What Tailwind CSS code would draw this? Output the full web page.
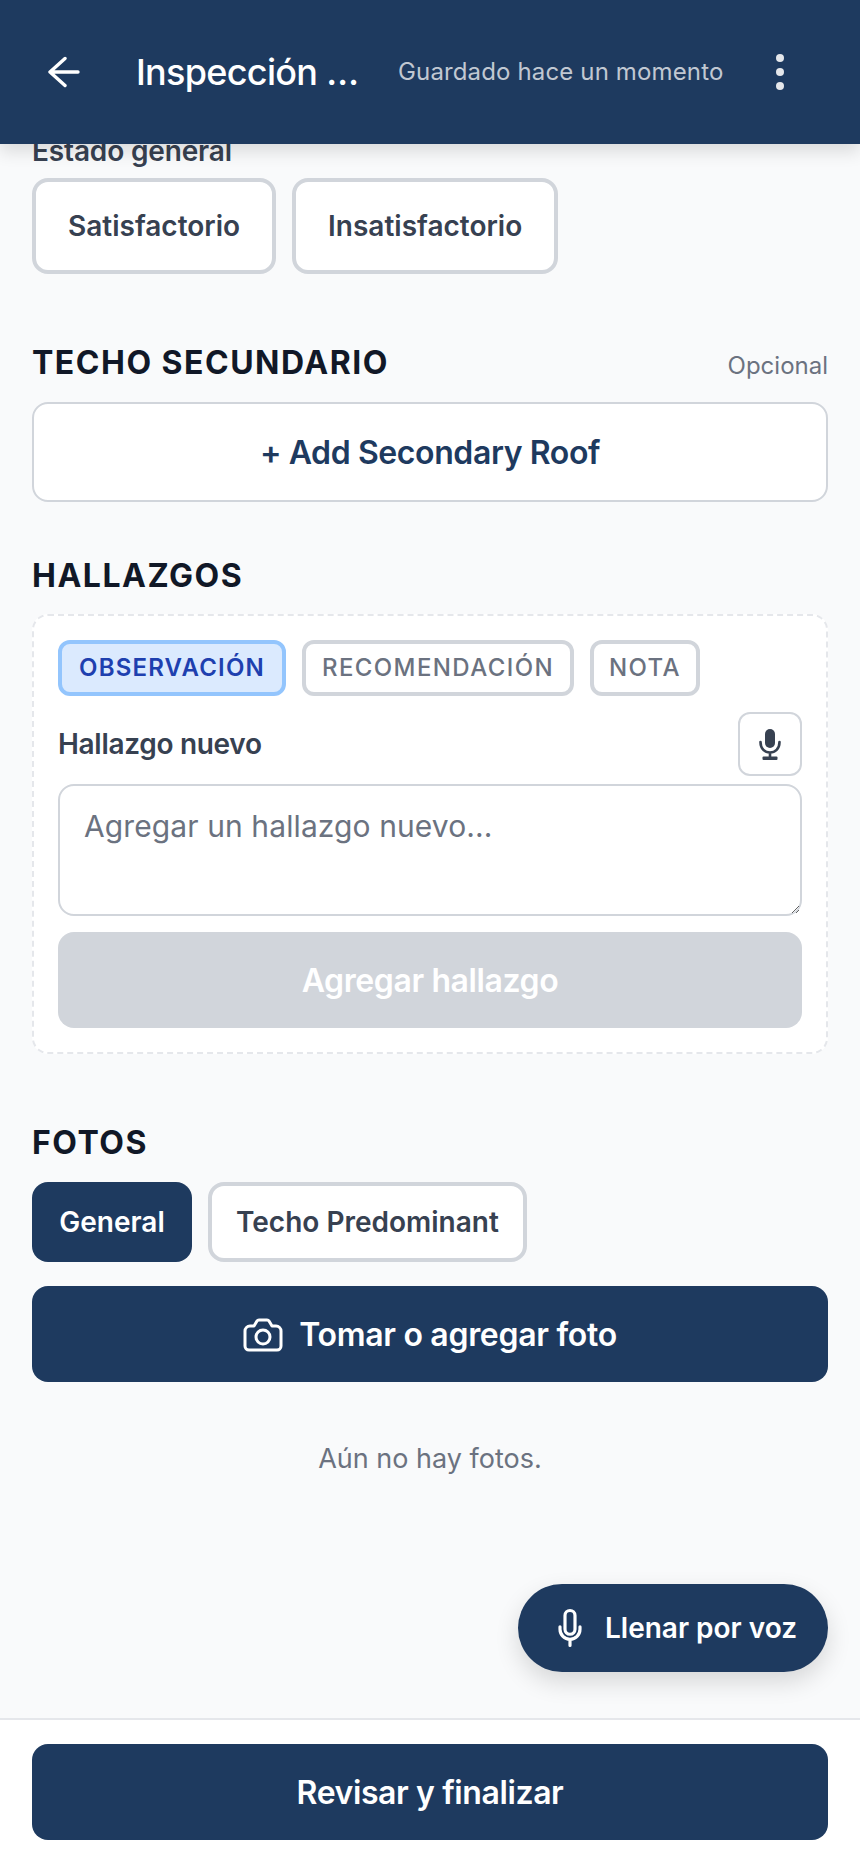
<!DOCTYPE html>
<html lang="es">
<head>
    <meta charset="UTF-8">
    <meta name="viewport" content="width=device-width, initial-scale=1.0">
    <title>Inspección</title>
    <script src="https://cdn.jsdelivr.net/npm/@tailwindcss/browser@4"></script>
</head>
<body class="bg-[#f9fafb] font-['Inter',sans-serif] text-[#374151]">
    <div class="relative flex flex-col h-[1864px] w-[860px] overflow-hidden">
        <!-- Header -->
        <header class="relative z-10 flex items-center h-[144px] shrink-0 pl-[48px] pr-[32px] bg-[#1e3a5f] text-white shadow-[0_8px_16px_rgba(0,0,0,0.12)]">
            <svg class="w-[32px] h-[32px] shrink-0" viewBox="0 0 32 32" fill="none" stroke="currentColor" stroke-width="3.4" stroke-linecap="round" stroke-linejoin="round">
                <path d="M17 2.5 2 16l15 13.5M2 16h28"/>
            </svg>
            <h1 class="ml-[56px] w-[223px] text-[36px] leading-[48px] font-medium tracking-[-0.7px] whitespace-nowrap">Inspección …</h1>
            <span class="ml-[39px] text-[24px] leading-[32px] tracking-[0.14px] text-[#c1c8d2] whitespace-nowrap">Guardado hace un momento</span>
            <div class="ml-auto mr-[44px] flex flex-col gap-[6px]">
                <span class="w-[8px] h-[8px] rounded-full bg-[#e5e7eb]"></span>
                <span class="w-[8px] h-[8px] rounded-full bg-[#e5e7eb]"></span>
                <span class="w-[8px] h-[8px] rounded-full bg-[#e5e7eb]"></span>
            </div>
        </header>

        <!-- Scrolled content -->
        <main class="flex-1 overflow-hidden px-[32px]">
            <div class="-mt-[13px]">
                <p class="text-[28px] leading-[40px] font-semibold tracking-[-0.15px]">Estado general</p>
                <div class="mt-[7px] flex gap-[16px]">
                    <button class="h-[96px] px-[32px] bg-white border-[4px] border-[#d1d5db] rounded-[16px] text-[28px] font-semibold">Satisfactorio</button>
                    <button class="h-[96px] px-[32px] bg-white border-[4px] border-[#d1d5db] rounded-[16px] text-[28px] font-semibold">Insatisfactorio</button>
                </div>
            </div>

            <section class="mt-[68px]">
                <div class="flex items-center justify-between h-[40px]">
                    <h2 class="pt-[1px] text-[32px] font-bold tracking-[1.5px] text-[#111827]">TECHO SECUNDARIO</h2>
                    <span class="mt-[7px] text-[24px] text-[#6b7280]">Opcional</span>
                </div>
                <button class="mt-[20px] pt-[2px] w-full h-[100px] bg-white border-[2px] border-[#d1d5db] rounded-[16px] text-[32px] font-semibold tracking-[-0.4px] text-[#1e3a5f]">+ Add Secondary Roof</button>
            </section>

            <section class="mt-[53px]">
                <h2 class="pt-[1px] h-[40px] leading-[40px] text-[32px] font-bold tracking-[1.5px] text-[#111827]">HALLAZGOS</h2>
                <div class="mt-[19px] p-[24px] bg-white border-[2px] border-dashed border-[#e5e7eb] rounded-[16px]">
                    <div class="flex gap-[16px]">
                        <button class="h-[56px] px-[17px] bg-[#dbeafe] border-[4px] border-[#93c5fd] rounded-[12px] text-[24px] font-semibold tracking-[1.2px] text-[#1e40af]">OBSERVACIÓN</button>
                        <button class="h-[56px] px-[16px] bg-white border-[4px] border-[#d1d5db] rounded-[12px] text-[24px] font-medium tracking-[1.4px] text-[#6b7280]">RECOMENDACIÓN</button>
                        <button class="h-[56px] w-[110px] bg-white border-[4px] border-[#d1d5db] rounded-[12px] text-[24px] font-medium tracking-[1.4px] text-[#6b7280]">NOTA</button>
                    </div>
                    <div class="mt-[16px] flex items-center justify-between">
                        <label class="text-[28px] font-semibold tracking-[-0.3px]">Hallazgo nuevo</label>
                        <button class="flex items-center justify-center w-[64px] h-[64px] border-[2px] border-[#d1d5db] rounded-[12px]">
                            <svg class="w-[22px] h-[31px]" viewBox="0 0 22 31" fill="none">
                                <rect x="6" y="0" width="10" height="19" rx="5" fill="#374151"/>
                                <path d="M1.5 13C1.500 20 6 23.500 11 23.500S20.500 20 20.500 13M11 23.500V28" stroke="#374151" stroke-width="2.6" stroke-linecap="round"/>
                                <rect x="3.5" y="27.5" width="15" height="3.5" rx="1" fill="#374151"/>
                            </svg>
                        </button>
                    </div>
                    <textarea class="mt-[8px] block w-full h-[132px] px-[24px] py-[20px] bg-white border-[2px] border-[#d1d5db] rounded-[16px] text-[30px] leading-[40px] tracking-[0.1px] placeholder:text-[#6b7280]" placeholder="Agregar un hallazgo nuevo..."></textarea>
                    <button class="mt-[16px] pt-[2px] w-full h-[96px] bg-[#d1d5db] rounded-[16px] text-[32px] font-semibold tracking-[-0.4px] text-white">Agregar hallazgo</button>
                </div>
            </section>

            <section class="mt-[69px]">
                <h2 class="h-[40px] leading-[40px] text-[32px] font-bold tracking-[1.5px] text-[#111827]">FOTOS</h2>
                <div class="mt-[19px] flex gap-[16px]">
                    <button class="h-[80px] w-[160px] bg-[#1e3a5f] rounded-[16px] text-[28px] font-semibold text-white">General</button>
                    <button class="h-[80px] px-[24px] bg-white border-[4px] border-[#d1d5db] rounded-[16px] text-[28px] font-semibold">Techo Predominant</button>
                </div>
                <button class="mt-[24px] pt-[2px] flex items-center justify-center gap-[16px] w-full h-[96px] bg-[#1e3a5f] rounded-[16px] text-[32px] font-semibold tracking-[-0.3px] text-white">
                    <svg class="w-[40px] h-[34px]" viewBox="0 0 40 34" fill="none" stroke="currentColor" stroke-width="3" stroke-linecap="round" stroke-linejoin="round">
                        <path d="M7 8h4l3-5q.6-1 2-1h8q1.400 0 2 1l3 5h4a5 5 0 0 1 5 5v15a4 4 0 0 1-4 4H6a4 4 0 0 1-4-4V13a5 5 0 0 1 5-5Z"/>
                        <circle cx="20" cy="19" r="7"/>
                    </svg>
                    Tomar o agregar foto
                </button>
                <p class="mt-[60px] text-center text-[27px] leading-[34px] text-[#6b7280]">Aún no hay fotos.</p>
            </section>
        </main>

        <!-- Voice button -->
        <button class="absolute left-[518px] top-[1584px] flex items-center gap-[15px] w-[310px] h-[88px] pl-[32px] bg-[#1e3a5f] rounded-full text-[28px] font-semibold text-white shadow-[0_10px_24px_rgba(0,0,0,0.14)]">
            <svg class="w-[40px] h-[40px]" viewBox="0 0 24 24" fill="none" stroke="currentColor" stroke-width="1.9" stroke-linecap="round" stroke-linejoin="round">
                <path d="M12 18.750a6 6 0 0 0 6-6v-1.500m-6 7.500a6 6 0 0 1-6-6v-1.500m6 7.500v3.750"/>
                <path d="M12 15.750a3 3 0 0 1-3-3V4.500a3 3 0 1 1 6 0v8.250a3 3 0 0 1-3 3Z"/>
            </svg>
            Llenar por voz
        </button>

        <!-- Footer -->
        <footer class="shrink-0 h-[146px] px-[32px] pt-[24px] bg-white border-t-[2px] border-[#e5e7eb]">
            <button class="pt-[2px] w-full h-[96px] bg-[#1e3a5f] rounded-[16px] text-[32px] font-semibold tracking-[-0.4px] text-white">Revisar y finalizar</button>
        </footer>
    </div>
</body>
</html>
